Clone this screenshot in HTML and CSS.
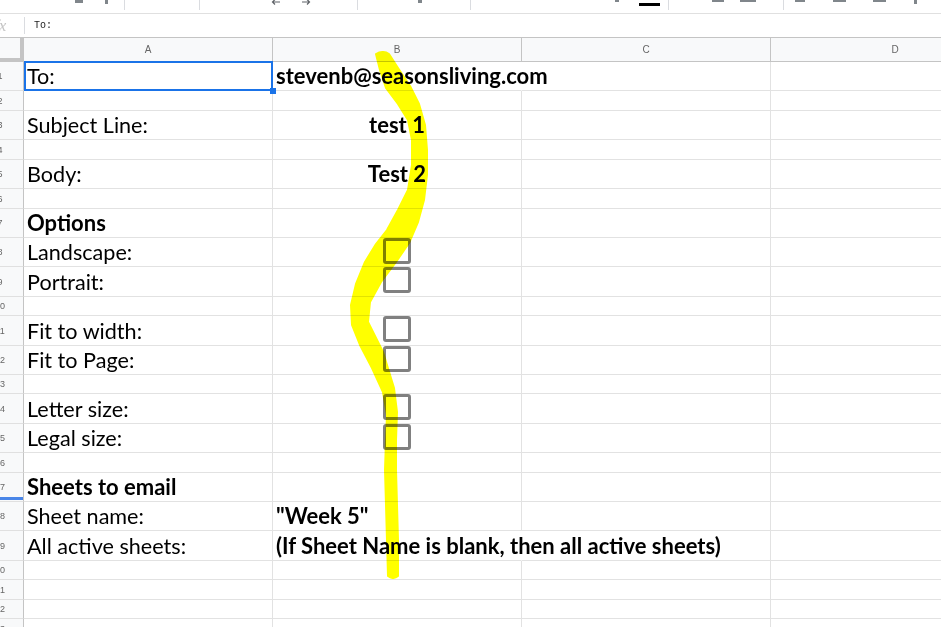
FILE: index.html
```html
<!DOCTYPE html>
<html>
<head>
<meta charset="utf-8">
<title>Email options</title>
<link rel="stylesheet" href="styles.css">
</head>
<body>
<div class="toolbar">
  <span class="tb tb1"></span>
  <span class="tb tb2"></span>
  <span class="tb-sep s1"></span>
  <span class="tb-sep s2"></span>
  <svg class="tb-arrow a1" width="10" height="6" viewBox="0 0 10 6"><path d="M9 3H1.5M4 0.5L1.5 3L4 5.5" fill="none" stroke="#5f6368" stroke-width="1.2"/></svg>
  <svg class="tb-arrow a2" width="10" height="6" viewBox="0 0 10 6"><path d="M1 3H8.5M6 0.5L8.5 3L6 5.5" fill="none" stroke="#5f6368" stroke-width="1.2"/></svg>
  <span class="tb-sep s3"></span>
  <span class="tb tb3"></span>
  <span class="tb-sep s4"></span>
  <span class="tb tb4"></span>
  <span class="tb-color"></span>
  <span class="tb-sep s5"></span>
  <span class="tb tb5"></span>
  <span class="tb tb6"></span>
  <span class="tb-sep s6"></span>
  <span class="tb tb7"></span>
  <span class="tb tb8"></span>
  <span class="tb tb9"></span>
  <span class="tb tb10"></span>
</div>
<div class="formula">
  <span class="fx">fx</span>
  <span class="fsep"></span>
  <span class="fval">To:</span>
</div>
<div class="sheet">
  <div class="corner"></div><div class="ch">A</div><div class="ch">B</div><div class="ch">C</div><div class="ch">D</div>

  <div class="rh">1</div><div class="c sel">To:</div><div class="c b over">stevenb@seasonsliving.com</div><div class="c"></div><div class="c"></div>
  <div class="rh">2</div><div class="c"></div><div class="c"></div><div class="c"></div><div class="c"></div>
  <div class="rh">3</div><div class="c">Subject Line:</div><div class="c b mid">test 1</div><div class="c"></div><div class="c"></div>
  <div class="rh">4</div><div class="c"></div><div class="c"></div><div class="c"></div><div class="c"></div>
  <div class="rh">5</div><div class="c">Body:</div><div class="c b mid">Test 2</div><div class="c"></div><div class="c"></div>
  <div class="rh">6</div><div class="c"></div><div class="c"></div><div class="c"></div><div class="c"></div>
  <div class="rh">7</div><div class="c b">Options</div><div class="c"></div><div class="c"></div><div class="c"></div>
  <div class="rh">8</div><div class="c">Landscape:</div><div class="c chk"><span class="cb"></span></div><div class="c"></div><div class="c"></div>
  <div class="rh">9</div><div class="c">Portrait:</div><div class="c chk"><span class="cb"></span></div><div class="c"></div><div class="c"></div>
  <div class="rh">10</div><div class="c"></div><div class="c"></div><div class="c"></div><div class="c"></div>
  <div class="rh">11</div><div class="c">Fit to width:</div><div class="c chk"><span class="cb"></span></div><div class="c"></div><div class="c"></div>
  <div class="rh">12</div><div class="c">Fit to Page:</div><div class="c chk"><span class="cb"></span></div><div class="c"></div><div class="c"></div>
  <div class="rh">13</div><div class="c"></div><div class="c"></div><div class="c"></div><div class="c"></div>
  <div class="rh">14</div><div class="c">Letter size:</div><div class="c chk"><span class="cb"></span></div><div class="c"></div><div class="c"></div>
  <div class="rh">15</div><div class="c">Legal size:</div><div class="c chk"><span class="cb"></span></div><div class="c"></div><div class="c"></div>
  <div class="rh">16</div><div class="c"></div><div class="c"></div><div class="c"></div><div class="c"></div>
  <div class="rh mark">17</div><div class="c b">Sheets to email</div><div class="c"></div><div class="c"></div><div class="c"></div>
  <div class="rh">18</div><div class="c">Sheet name:</div><div class="c b">"Week 5"</div><div class="c"></div><div class="c"></div>
  <div class="rh">19</div><div class="c">All active sheets:</div><div class="c b over">(If Sheet Name is blank, then all active sheets)</div><div class="c"></div><div class="c"></div>
  <div class="rh">20</div><div class="c"></div><div class="c"></div><div class="c"></div><div class="c"></div>
  <div class="rh">21</div><div class="c"></div><div class="c"></div><div class="c"></div><div class="c"></div>
  <div class="rh">22</div><div class="c"></div><div class="c"></div><div class="c"></div><div class="c"></div>
  <div class="rh">23</div><div class="c"></div><div class="c"></div><div class="c"></div><div class="c"></div>
</div>
<svg class="highlight" width="941" height="627" viewBox="0 0 941 627">
  <path d="M376,54 L380,70 L386,88 L398,104 L408,120 L412,140 L412,165 L408,190 L398,210 L387,230 L376,244 L365,262 L356,284 L351,305 L352,325 L360,345 L372,368 L383,392 L387,415 L386,440 L385,470 L386,505 L387,540 L388,576 Q393,580 398,576 L398,540 L397,505 L396,470 L396,440 L397,412 L394,388 L383,352 L368,322 L370,302 L381,282 L396,262 L409,243 L418,222 L424,200 L427,175 L427,150 L425,125 L419,104 L410,86 L398,68 L389,54 Q383,50 376,54 Z" fill="#ffff00" stroke="#ffff00" stroke-width="2" stroke-linejoin="round"/>
</svg>
</body>
</html>
```

FILE: styles.css
```css
* { box-sizing: border-box; margin: 0; padding: 0; }
html, body { width: 941px; height: 627px; overflow: hidden; background: #fff; }
body { position: relative; font-family: Lato, "Liberation Sans", sans-serif; }

.toolbar { height: 14px; border-bottom: 1px solid #e0e0e0; display: flex; align-items: flex-start; overflow: hidden; }
.tb { display: block; flex: none; background: #80868b; height: 3px; }
.tb-sep { display: block; flex: none; width: 1px; height: 10px; background: #dadce0; }
.tb-arrow { display: block; flex: none; }
.tb-color { display: block; flex: none; width: 21px; height: 3px; margin-top: 3px; margin-left: 20px; background: #000; }
.tb1 { margin-left: 75px; width: 8px; }
.tb2 { margin-left: 22px; width: 3px; height: 4px; }
.s1 { margin-left: 16px; }
.s2 { margin-left: 74px; }
.a1 { margin-left: 71px; margin-top: -1px; }
.a2 { margin-left: 20px; margin-top: -1px; }
.s3 { margin-left: 46px; }
.tb3 { margin-left: 60px; width: 4px; }
.s4 { margin-left: 48px; }
.tb4 { margin-left: 144px; width: 4px; height: 2px; }
.s5 { margin-left: 8px; }
.tb5 { margin-left: 43px; width: 12px; height: 2px; }
.tb6 { margin-left: 16px; width: 16px; height: 2px; }
.s6 { margin-left: 27px; }
.tb7 { margin-left: 11px; width: 10px; height: 2px; }
.tb8 { margin-left: 28px; width: 13px; height: 2px; }
.tb9 { margin-left: 27px; width: 13px; height: 2px; }
.tb10 { margin-left: 28px; width: 3px; height: 4px; }

.formula { height: 23px; display: flex; align-items: center; }
.fx { font-family: "Liberation Serif", serif; font-style: italic; font-size: 17px; color: #c4c4c4; margin-left: -6px; width: 16px; }
.fsep { width: 1px; height: 17px; background: #dadce0; margin-left: 14px; }
.fval { font-family: "Liberation Mono", monospace; font-size: 10px; color: #222; margin-left: 9px; }

.sheet {
  display: grid;
  width: 1043px;
  margin-left: -23px;
  grid-template-columns: 47px 249px 249px 249px 249px;
  grid-template-rows: 25px 29px 20px 29px 20px 29px 20px 29px 29px 30px 19px 30px 29px 19px 30px 29px 20px 29px 29px 30px 19px 20px 19px 20px;
}
.corner { background: #f8f9fa; border-top: 1px solid #c4c4c4; border-right: 4px solid #c4c4c4; border-bottom: 4px solid #c4c4c4; }
.ch {
  background: #f8f9fa; border-top: 1px solid #c4c4c4; border-bottom: 1px solid #c4c4c4; border-right: 1px solid #c4c4c4;
  font: 10px "Liberation Sans", Arial, sans-serif; color: #666;
  display: flex; align-items: center; justify-content: center;
}
.rh {
  position: relative;
  background: #f8f9fa; border-right: 1px solid #c4c4c4; border-bottom: 1px solid #e0e0e0;
  font: 9px "Liberation Sans", Arial, sans-serif; color: #666;
  display: flex; align-items: center; justify-content: center;
}
.rh.mark::after { content: ""; position: absolute; left: 0; right: 0; bottom: 1px; height: 3px; background: #4a86e8; }

.c {
  position: relative; min-width: 0;
  border-right: 1px solid #e2e2e2; border-bottom: 1px solid #e2e2e2;
  display: flex; align-items: flex-end;
  padding: 0 3px 1px;
  font-size: 21.6px; line-height: normal; color: #000; white-space: nowrap;
}
.c.b { font-weight: 700; font-size: 22px; }
.c.mid { justify-content: center; }
.c.over { border-right-color: transparent; }
.c.chk { justify-content: center; align-items: flex-start; padding: 0; }
.cb { display: block; width: 28px; height: 26px; border: 3px solid #808080; border-radius: 3px; background: #fff; }

.sel::after { content: ""; position: absolute; left: 0; top: -1px; right: -1px; bottom: -1px; border: 2px solid #1a73e8; z-index: 2; }
.sel::before { content: ""; position: absolute; right: -4px; bottom: -4px; width: 6px; height: 6px; background: #1a73e8; z-index: 3; }

.highlight { position: absolute; left: 0; top: 0; pointer-events: none; mix-blend-mode: multiply; }
```
